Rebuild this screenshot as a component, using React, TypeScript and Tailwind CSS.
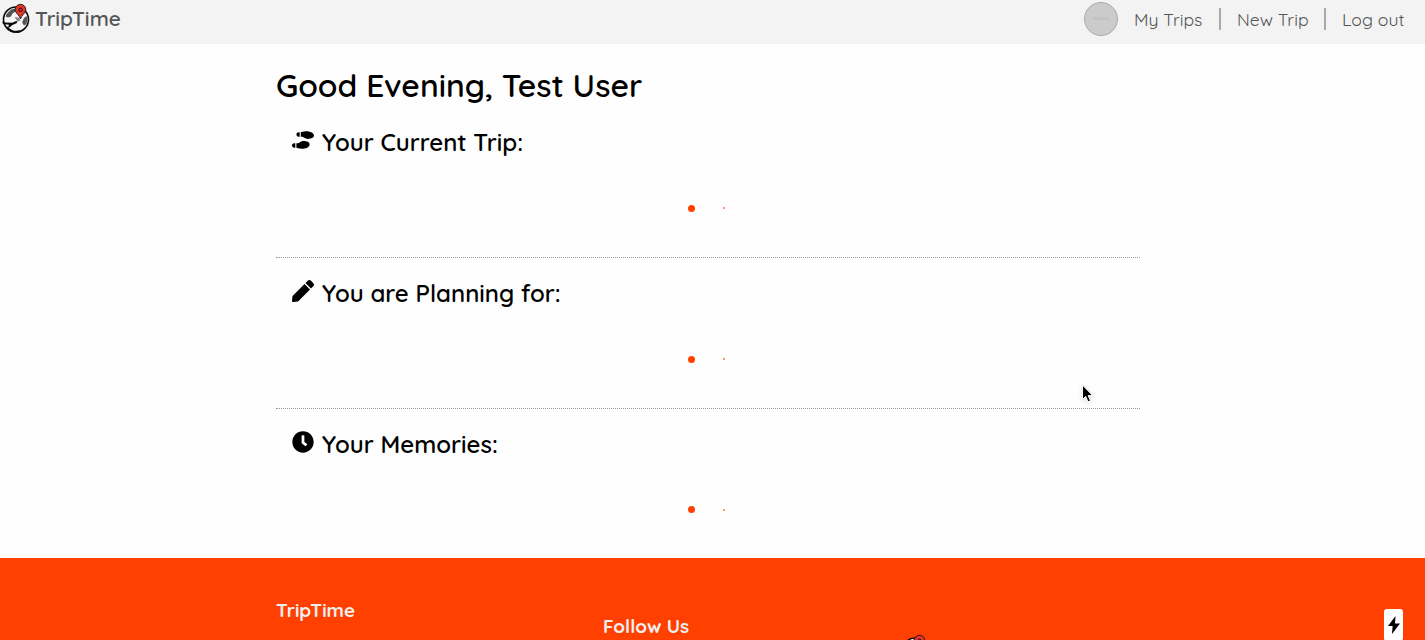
import type { IconType } from "react-icons";
import { FaShoePrints, FaPen, FaClock } from "react-icons/fa";

function Globe() {
  return (
    <svg viewBox="0 0 32 34" className="block h-[34px] w-8 shrink-0">
      <circle cx="16" cy="19.500" r="12.500" fill="#f8f8f8" stroke="#0a0a0a" strokeWidth="1.600" />
      <path d="M6.500 14l4.500-4.500 4-1 .5 3-3 2-1.500 3-3 1-2.500-1zM24 18l2.500-2 1 3-1 5-2.500 1.500-2-3z" fill="#555" />
      <path d="M14.500 17l4 .5 2 3-3 1z" fill="#888" />
      <path d="M7 27c3 4 8 5.600 13 4.300" fill="none" stroke="#0a0a0a" strokeWidth="2" />
      <path d="M2.200 21.500l3 1 7 .3 4-1.800 1.300.8-1 1.500-4 1.700-3 2.500-1.500-.2 1-2.500-6-.8z" fill="#0a0a0a" />
      <path d="M20.500 19c-1-4-5.300-5.800-5.300-9.400a5.300 5.300 0 0 1 10.600 0c0 3.600-4.300 5.400-5.300 9.400z" fill="#e6332a" stroke="#111" strokeWidth=".9" />
      <circle cx="20.500" cy="9.800" r="1.700" fill="#e6332a" stroke="#111" strokeWidth="1" />
    </svg>
  );
}

function Section({ icon: Icon, title, last }: { icon: IconType; title: string; last?: boolean }) {
  return (
    <section className={last ? "h-[149px]" : "h-[151px] border-b border-dotted border-[#999]"}>
      <div className="flex pl-4 pt-5">
        <Icon className="mt-[2px] size-[22px] shrink-0" />
        <h2 className="ml-2 text-[24px] font-semibold leading-[30px]">{title}</h2>
      </div>
      <div className={last ? "mt-[47px] flex h-[7px] items-center pl-[412px]" : "mt-[47px] flex h-2 items-center pl-[412px]"}>
        <span className="size-[7px] rounded-full bg-[#ff4000]" />
        <span className="ml-[28px] h-[2px] w-[2px] rounded-full bg-[#ff4000]/75" />
      </div>
    </section>
  );
}

export default function App() {
  return (
    <div className="flex h-[640px] w-full flex-col overflow-hidden bg-[#fefefe] font-['Quicksand','Lato',sans-serif] text-black">
      <header className="flex h-11 shrink-0 items-start justify-between bg-[#f3f3f3] text-[#555]">
        <div className="flex">
          <Globe />
          <span className="ml-[3px] mt-1 text-[20.8px] font-semibold leading-7">TripTime</span>
        </div>
        <nav className="mr-[21px] flex items-center text-[17.6px] leading-6">
          <span className="mr-4 mt-[2px] flex size-[34px] items-center justify-center rounded-full border border-[#aaa] bg-[#cbcbcb] text-[4px] text-[#aaa]">150 x 150</span>
          <span className="mt-[1px] w-[70px] whitespace-nowrap">My Trips</span>
          <span className="ml-[15px] mt-[1px] h-[22px] w-[2px] bg-[#aaa]" />
          <span className="ml-4 mt-[1px] w-[72px] whitespace-nowrap">New Trip</span>
          <span className="ml-[15px] mt-[1px] h-[22px] w-[2px] bg-[#aaa]" />
          <span className="ml-4 mt-[1px] w-[62px] whitespace-nowrap">Log out</span>
        </nav>
      </header>
      <main className="ml-[276px] h-[514px] w-[864px] shrink-0">
        <h1 className="h-[63px] pt-5 text-[31.9px] font-semibold leading-[42px]">Good Evening, Test User</h1>
        <Section icon={FaShoePrints} title="Your Current Trip:" />
        <Section icon={FaPen} title="You are Planning for:" />
        <Section icon={FaClock} last title="Your Memories:" />
      </main>
      <footer className="flex h-[82px] shrink-0 items-start overflow-hidden bg-[#ff4000] pl-[276px] text-[18.9px] font-bold leading-6 text-[#eee]">
        <span className="mt-10 w-[327px]">TripTime</span>
        <span className="mt-14 w-[296px]">Follow Us</span>
        <span className="mt-[73px]"><Globe /></span>
        <span className="ml-auto mr-[22px] mt-[51px] flex h-8 w-[19px] items-center justify-center rounded-[3px] bg-white">
          <svg viewBox="0 0 12 18" className="h-[18px] w-3"><path d="M7.500 0L0 10h4.600L4 18l8-10.500H7z" fill="#000" /></svg>
        </span>
      </footer>
      <svg viewBox="0 0 14 20" className="absolute left-[1081px] top-[384px] h-5 w-3.5 drop-shadow-sm">
        <path d="M1.500 1v14.500l3.200-3 2.300 5.300 2.500-1-2.300-5.200h4.500z" fill="#000" stroke="#fff" strokeWidth="1" />
      </svg>
    </div>
  );
}
